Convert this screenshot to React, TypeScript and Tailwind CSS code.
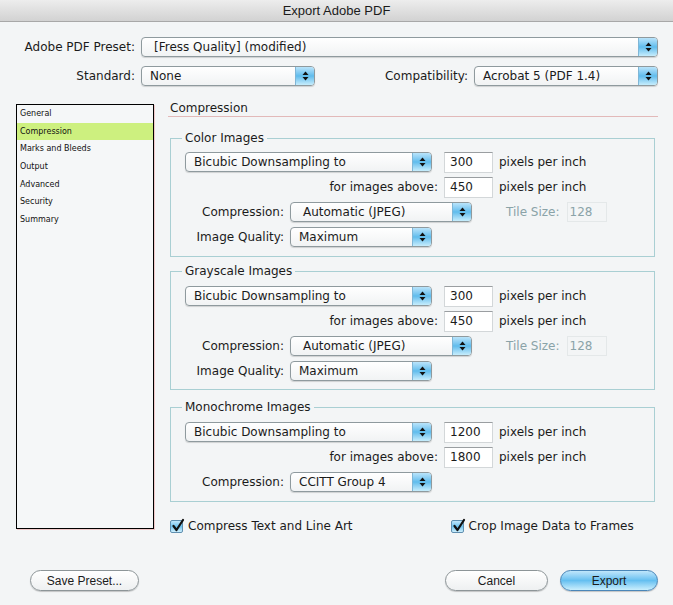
import React from 'react';

function Arrows() {
  return (
    <svg width="7" height="10" viewBox="0 0 7 10">
      <path d="M3.5 0.5 L6.5 4 L0.5 4 Z" fill="#111" />
      <path d="M3.5 9.5 L6.5 6 L0.5 6 Z" fill="#111" />
    </svg>
  );
}

function Popup({ text, className, pad = 'pl-[8px]' }: { text: string; className: string; pad?: string }) {
  return (
    <div className={`h-[20px] flex rounded-[4px] border border-[#8f9a9e] bg-linear-to-b from-white to-[#f1f3f4] shadow-[0_1px_1px_rgba(0,0,0,0.15)] overflow-hidden ${className}`}>
      <div className={`flex-1 flex items-center ${pad} text-[12px] leading-none whitespace-nowrap`}>{text}</div>
      <div className="w-[19px] flex items-center justify-center border-l border-[#7fb6d6] bg-linear-to-b from-[#b9e4fb] via-[#5fbcec] to-[#c6edfc]">
        <Arrows />
      </div>
    </div>
  );
}

function Field({ value }: { value: string }) {
  return (
    <div className="w-[49px] h-[21px] bg-white border border-[#d3d7d9] border-t-[#9a9ea1] flex items-center pl-[5px] text-[12px] leading-none">
      {value}
    </div>
  );
}

function Check({ label }: { label: string }) {
  return (
    <div className="flex items-center">
      <div className="w-[13px] h-[13px] rounded-[2px] border border-[#5f8fb0] bg-linear-to-b from-[#bfe6fb] via-[#6cc2ee] to-[#cdeffc] relative">
        <svg className="absolute -top-[3px] left-0" width="14" height="15" viewBox="0 0 14 15">
          <path d="M2.5 8 L5.5 12 L12 2" fill="none" stroke="#111" strokeWidth="2.2" strokeLinejoin="round" strokeLinecap="round" />
        </svg>
      </div>
      <span className="ml-[5px] text-[12px]">{label}</span>
    </div>
  );
}

function Group({ title, children, className }: { title: string; children: React.ReactNode; className: string }) {
  return (
    <fieldset className={`ml-[2px] w-[485px] border border-[#a9cfd3] px-[14px] ${className}`}>
      <legend className="text-[12px] leading-[15px] px-[3px] -ml-[3px]">{title}</legend>
      {children}
    </fieldset>
  );
}

function ImageRows({ ppi, above, mode, quality }: { ppi: string; above: string; mode: string; quality?: boolean }) {
  return (
    <div className="flex flex-col gap-[5px]">
      <div className="h-[20px] flex items-center">
        <Popup text="Bicubic Downsampling to" className="w-[247px]" />
        <div className="ml-[12px]"><Field value={ppi} /></div>
        <span className="ml-[6px] text-[12px]">pixels per inch</span>
      </div>
      <div className="h-[20px] flex items-center">
        <span className="w-[253px] text-right text-[12px]">for images above:</span>
        <div className="ml-[6px]"><Field value={above} /></div>
        <span className="ml-[6px] text-[12px]">pixels per inch</span>
      </div>
      <div className="h-[20px] flex items-center">
        <span className="w-[99px] text-right text-[12px]">Compression:</span>
        {quality ? (
          <>
            <Popup text={mode} className="ml-[6px] w-[182px]" pad="pl-[12px]" />
            <span className="ml-[34px] text-[12px] text-[#8aa3a8]">Tile Size:</span>
            <div className="ml-[7px] w-[40px] h-[20px] border border-[#e4e8e9] flex items-center pl-[2px] text-[12px] text-[#8aa3a8]">128</div>
          </>
        ) : (
          <Popup text={mode} className="ml-[6px] w-[142px]" />
        )}
      </div>
      {quality && (
        <div className="h-[20px] flex items-center">
          <span className="w-[99px] text-right text-[12px]">Image Quality:</span>
          <Popup text="Maximum" className="ml-[6px] w-[142px]" />
        </div>
      )}
    </div>
  );
}

const sections = ['General', 'Compression', 'Marks and Bleeds', 'Output', 'Advanced', 'Security', 'Summary'];

export default function App() {
  return (
    <div className="w-[673px] h-[605px] bg-[#f3f5f6] flex flex-col text-[#1b1b1b] font-['DejaVu_Sans',sans-serif]">
      <div className="h-[22px] flex items-center justify-center text-[13px] font-['Liberation_Sans',sans-serif] bg-linear-to-b from-[#ededed] to-[#d2d2d2] border-b border-[#a8a8a8]">
        Export Adobe PDF
      </div>

      <div className="mt-[15px] px-[15px] h-[20px] flex items-center">
        <span className="w-[120px] text-right text-[12px]">Adobe PDF Preset:</span>
        <Popup text="[Fress Quality] (modified)" className="ml-[6px] flex-1" pad="pl-[12px]" />
      </div>

      <div className="mt-[9px] px-[15px] h-[20px] flex items-center">
        <span className="w-[120px] text-right text-[12px]">Standard:</span>
        <Popup text="None" className="ml-[6px] w-[174px]" />
        <span className="ml-auto text-[12px]">Compatibility:</span>
        <Popup text="Acrobat 5 (PDF 1.4)" className="ml-[6px] w-[184px]" />
      </div>

      <div className="mt-[15px] flex">
        <div className="ml-[16px] mt-[3px] w-[138px] h-[425px] border border-black bg-[#f5f7f8] shadow-[1px_1px_0_#f0c8c8]">
          {sections.map(s => (
            <div
              key={s}
              className={`h-[17.7px] flex items-center pl-[3px] text-[8px] text-[#111] ${s === 'Compression' ? 'bg-[#cdf07f]' : ''}`}
            >
              {s}
            </div>
          ))}
        </div>

        <div className="ml-[14px] w-[490px] flex flex-col">
          <div className="h-[16px] border-b border-[#e2b9b9] text-[12px] leading-[15px] pl-[2px]">Compression</div>

          <Group title="Color Images" className="mt-[14px] pt-[6px] pb-[9px]">
            <ImageRows ppi="300" above="450" mode="Automatic (JPEG)" quality />
          </Group>

          <Group title="Grayscale Images" className="mt-[7px] pt-[7px] pb-[8px]">
            <ImageRows ppi="300" above="450" mode="Automatic (JPEG)" quality />
          </Group>

          <Group title="Monochrome Images" className="mt-[10px] pt-[7px] pb-[9px]">
            <ImageRows ppi="1200" above="1800" mode="CCITT Group 4" />
          </Group>

          <div className="mt-[15px] flex items-center">
            <div className="ml-[2px]"><Check label="Compress Text and Line Art" /></div>
            <div className="ml-[98px]"><Check label="Crop Image Data to Frames" /></div>
          </div>
        </div>
      </div>

      <div className="mt-[35px] flex items-center px-[15px] text-[12px] font-['Liberation_Sans',sans-serif]">
        <button className="ml-[15px] w-[109px] h-[21px] rounded-full border border-[#8d9598] bg-linear-to-b from-white to-[#eef0f1] shadow-[0_1px_1px_rgba(0,0,0,0.2)]">Save Preset...</button>
        <button className="ml-auto w-[103px] h-[21px] rounded-full border border-[#8d9598] bg-linear-to-b from-white to-[#eef0f1] shadow-[0_1px_1px_rgba(0,0,0,0.2)]">Cancel</button>
        <button className="ml-[12px] w-[98px] h-[21px] rounded-full border border-[#4a86b8] bg-linear-to-b from-[#bfe6fb] via-[#64bff0] to-[#c9effd] shadow-[0_1px_1px_rgba(0,0,0,0.2)]">Export</button>
      </div>
    </div>
  );
}
